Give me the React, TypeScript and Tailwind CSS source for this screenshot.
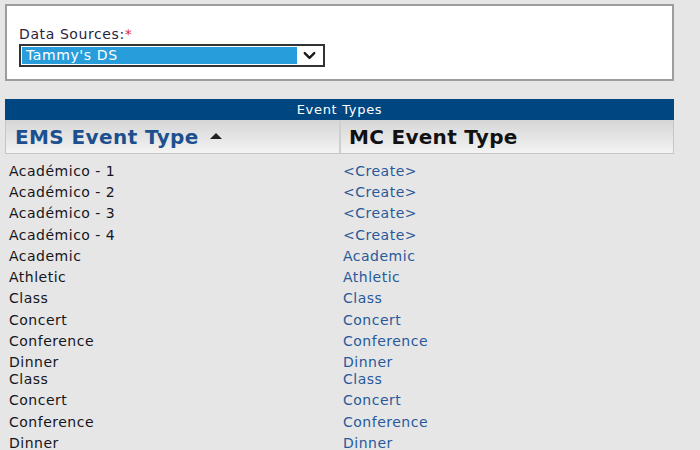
import { ChevronDown } from "lucide-react";

type Row = { ems: string; mc: string };

const firstRows: Row[] = [
    { ems: "Académico - 1", mc: "<Create>" },
    { ems: "Académico - 2", mc: "<Create>" },
    { ems: "Académico - 3", mc: "<Create>" },
    { ems: "Académico - 4", mc: "<Create>" },
    { ems: "Academic", mc: "Academic" },
    { ems: "Athletic", mc: "Athletic" },
    { ems: "Class", mc: "Class" },
    { ems: "Concert", mc: "Concert" },
    { ems: "Conference", mc: "Conference" },
    { ems: "Dinner", mc: "Dinner" },
];

const moreRows: Row[] = [
    { ems: "Class", mc: "Class" },
    { ems: "Concert", mc: "Concert" },
    { ems: "Conference", mc: "Conference" },
    { ems: "Dinner", mc: "Dinner" },
];

const RowList = ({ rows, className = "" }: { rows: Row[]; className?: string }) => (
    <div className={`flex flex-col ${className}`}>
        {rows.map((r, i) => (
            <div key={i} className="flex h-[21.3px] items-center text-[14px] leading-[16px] tracking-[0.5px]">
                <span className="w-[335px] pl-[4px] text-[#15151c]">{r.ems}</span>
                <span className="pl-[3px] text-[#28599a] cursor-pointer">{r.mc}</span>
            </div>
        ))}
    </div>
);

export default function App() {
    return (
        <div
            className="w-[700px] h-[450px] overflow-hidden bg-[#e6e6e6] pt-[4px] pl-[5px]"
            style={{ fontFamily: '"DejaVu Sans", Verdana, sans-serif' }}
        >
            {/* Data source picker */}
            <div className="w-[669px] h-[77px] border-2 border-[#9c9c9c] bg-white pl-[12px] pt-[20px]">
                <div className="text-[14px] leading-[17px] tracking-[0.6px] text-[#2a2440]">
                    Data Sources:<span className="text-[#e0302c]">*</span>
                </div>
                <div className="mt-[1px] flex w-[306px] h-[23px] items-center border-2 border-[#333] bg-white p-[1px]">
                    <div className="flex h-full w-[275px] items-center bg-[#279ddc] pl-[4px] text-[14px] tracking-[0.6px] text-white">
                        Tammy's DS
                    </div>
                    <div className="flex flex-1 items-center justify-center">
                        <ChevronDown className="w-[19px] h-[19px] text-[#1a1a1a]" strokeWidth={3} />
                    </div>
                </div>
            </div>

            {/* Event types table */}
            <div className="mt-[18px] w-[669px]">
                <div className="flex h-[21px] items-center justify-center bg-[#004681] text-[13px] tracking-[0.7px] text-white">
                    Event Types
                </div>
                <div className="flex h-[34px] border border-t-0 border-[#c6c6c6] bg-gradient-to-b from-[#d6d6d6] to-[#f3f3f3]">
                    <div className="flex w-[335px] items-center gap-[11px] border-r-2 border-[#cfcfcf] pl-[9px]">
                        <span className="text-[20px] tracking-[0.4px] font-bold text-[#1b4f8e]">EMS Event Type</span>
                        <svg width="12" height="6" viewBox="0 0 12 6" className="mb-[2px]">
                            <path d="M0 6 L6 0 L12 6 Z" fill="#222" />
                        </svg>
                    </div>
                    <div className="flex items-center pl-[8px]">
                        <span className="text-[20px] tracking-[0.3px] font-bold text-[#111]">MC Event Type</span>
                    </div>
                </div>
                <RowList rows={firstRows} className="mt-[6px]" />
                <RowList rows={moreRows} className="-mt-[4.6px]" />
            </div>
        </div>
    );
}
